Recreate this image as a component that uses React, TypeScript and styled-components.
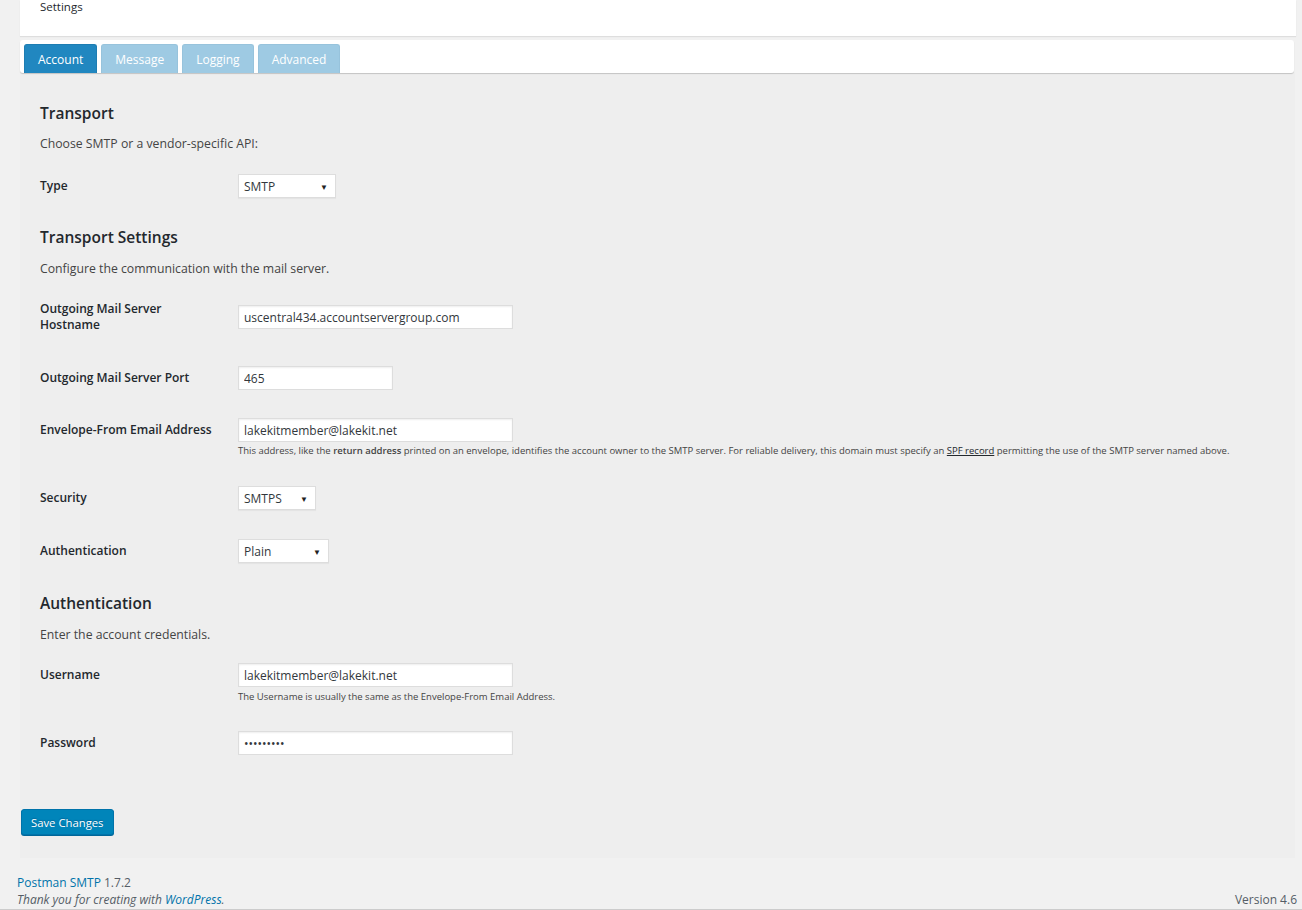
import React from 'react'
import styled, { createGlobalStyle } from 'styled-components'

const GlobalStyle = createGlobalStyle`
  html, body {
    margin: 0;
    padding: 0;
    background: #f1f1f1;
    font-family: "Open Sans", "Noto Sans", sans-serif;
    color: #444;
  }
`

const Page = styled.div`
  width: 1302px;
  height: 910px;
  overflow: hidden;
  display: flex;
  flex-direction: column;
`

const Wrap = styled.div`
  padding: 0 6px 0 20px;
`

const Header = styled.div`
  height: 36px;
  box-sizing: border-box;
  background: #fff;
  box-shadow: 0 1px 1px rgba(0, 0, 0, 0.08);
  padding: 0 20px;
  font-size: 11.5px;
  line-height: 13px;
  color: #23282d;
`

const TabBar = styled.div`
  margin: 4px 2px 0 0;
  height: 29px;
  padding: 4px 0 0 4px;
  background: #fff;
  border-radius: 3px;
  box-shadow: 0 1px 1px rgba(0, 0, 0, 0.18);
  display: flex;
  gap: 4px;
  position: relative;
  z-index: 1;
`

const Tab = styled.div<{ $active?: boolean }>`
  height: 29px;
  padding: 0 13px;
  display: flex;
  align-items: center;
  font-size: 12px;
  color: #fff;
  border-radius: 3px 3px 0 0;
  background: ${p => (p.$active ? '#2187c0' : '#9ecae3')};
  border: 1px solid ${p => (p.$active ? '#1e7db2' : '#97c3dc')};
  border-bottom: none;
  box-sizing: border-box;
`

const Content = styled.div`
  margin-right: 1px;
  background: #eeeeee;
  padding: 29px 0 23px 0;
`

const Form = styled.div`
  padding: 0 20px;
  display: flex;
  flex-direction: column;
`

const Heading = styled.h2<{ $gap?: number }>`
  margin: ${p => p.$gap || 0}px 0 0 0;
  font-size: 15.5px;
  line-height: 22px;
  font-weight: 600;
  color: #23282d;
`

const Intro = styled.p<{ $gap: number }>`
  margin: ${p => p.$gap}px 0 0 0;
  font-size: 12.25px;
  line-height: 18px;
  color: #444;
`

const Row = styled.div<{ $gap: number }>`
  margin-top: ${p => p.$gap}px;
  display: grid;
  grid-template-columns: 198px auto;
  align-items: center;
`

const Label = styled.div<{ $wide?: boolean }>`
  font-size: 12px;
  line-height: 16px;
  font-weight: 600;
  color: #23282d;
  width: ${p => (p.$wide ? 'auto' : '172px')};
  white-space: ${p => (p.$wide ? 'nowrap' : 'normal')};
`

const TextInput = styled.input<{ $w: number }>`
  width: ${p => p.$w}px;
  height: 24px;
  box-sizing: border-box;
  border: 1px solid #ddd;
  box-shadow: inset 0 1px 2px rgba(0, 0, 0, 0.07);
  background: #fff;
  padding: 0 5px;
  margin: 0;
  font-family: "Open Sans", "Noto Sans", sans-serif;
  font-size: 12px;
  color: #32373c;
  outline: none;
`

const Select = styled.div<{ $w: number }>`
  width: ${p => p.$w}px;
  height: 24px;
  box-sizing: border-box;
  border: 1px solid #ddd;
  box-shadow: 0 1px 1px rgba(0, 0, 0, 0.04);
  background: #fff;
  padding: 0 7px 0 5px;
  display: flex;
  align-items: center;
  justify-content: space-between;
  font-size: 12px;
  color: #32373c;
`

const Arrow = styled.span`
  font-size: 8px;
  color: #222;
`

const Desc = styled.div<{ $gap: number }>`
  grid-column: 2;
  margin-top: ${p => p.$gap}px;
  font-size: 9.5px;
  line-height: 14px;
  color: #444;
  white-space: nowrap;
  b {
    font-weight: 600;
  }
  a {
    color: #23282d;
    text-decoration: underline;
  }
`

const Actions = styled.div`
  margin-top: 54px;
  padding-left: 1px;
`

const SaveButton = styled.button`
  height: 26px;
  padding: 0 9px;
  font-family: "Open Sans", "Noto Sans", sans-serif;
  font-size: 11.3px;
  color: #fff;
  background: #0085ba;
  border: 1px solid #0073aa;
  border-radius: 3px;
  box-shadow: 0 1px 0 #006799;
  text-shadow: 0 -1px 1px #006799;
`

const Footer = styled.div`
  flex: 1;
  padding: 16px 5px 1px 17px;
  display: flex;
  justify-content: space-between;
  align-items: flex-end;
  font-size: 12px;
  color: #555d66;
  border-bottom: 1px solid #ccc;
  margin-bottom: 2px;
`

const FooterLeft = styled.div`
  line-height: 17px;
`

const Thanks = styled.div`
  font-style: italic;
`

const Link = styled.a`
  color: #0073aa;
  text-decoration: none;
`

const Version = styled.div`
  line-height: 17px;
`

export default function App() {
  return (
    <Page>
      <GlobalStyle />
      <Wrap>
        <Header>Settings</Header>
        <TabBar>
          <Tab $active>Account</Tab>
          <Tab>Message</Tab>
          <Tab>Logging</Tab>
          <Tab>Advanced</Tab>
        </TabBar>
        <Content>
          <Form>
            <Heading>Transport</Heading>
            <Intro $gap={11}>Choose SMTP or a vendor-specific API:</Intro>
            <Row $gap={21}>
              <Label>Type</Label>
              <Select $w={98}>
                SMTP<Arrow>▼</Arrow>
              </Select>
            </Row>

            <Heading $gap={28}>Transport Settings</Heading>
            <Intro $gap={12}>Configure the communication with the mail server.</Intro>
            <Row $gap={23}>
              <Label>Outgoing Mail Server Hostname</Label>
              <TextInput $w={275} readOnly value="uscentral434.accountservergroup.com" />
            </Row>
            <Row $gap={33}>
              <Label>Outgoing Mail Server Port</Label>
              <TextInput $w={155} readOnly value="465" />
            </Row>
            <Row $gap={28}>
              <Label $wide>Envelope-From Email Address</Label>
              <TextInput $w={275} readOnly value="lakekitmember@lakekit.net" />
              <Desc $gap={2}>
                This address, like the <b>return address</b> printed on an envelope, identifies the account owner to the
                SMTP server. For reliable delivery, this domain must specify an <a>SPF record</a> permitting the use of
                the SMTP server named above.
              </Desc>
            </Row>
            <Row $gap={28}>
              <Label>Security</Label>
              <Select $w={78}>
                SMTPS<Arrow>▼</Arrow>
              </Select>
            </Row>
            <Row $gap={29}>
              <Label>Authentication</Label>
              <Select $w={91}>
                Plain<Arrow>▼</Arrow>
              </Select>
            </Row>

            <Heading $gap={29}>Authentication</Heading>
            <Intro $gap={12}>Enter the account credentials.</Intro>
            <Row $gap={19}>
              <Label>Username</Label>
              <TextInput $w={275} readOnly value="lakekitmember@lakekit.net" />
              <Desc $gap={3}>The Username is usually the same as the Envelope-From Email Address.</Desc>
            </Row>
            <Row $gap={27}>
              <Label>Password</Label>
              <TextInput $w={275} type="password" readOnly value="123456789" />
            </Row>
          </Form>
          <Actions>
            <SaveButton>Save Changes</SaveButton>
          </Actions>
        </Content>
      </Wrap>
      <Footer>
        <FooterLeft>
          <div>
            <Link>Postman SMTP</Link> 1.7.2
          </div>
          <Thanks>
            Thank you for creating with <Link>WordPress</Link>.
          </Thanks>
        </FooterLeft>
        <Version>Version 4.6</Version>
      </Footer>
    </Page>
  )
}
